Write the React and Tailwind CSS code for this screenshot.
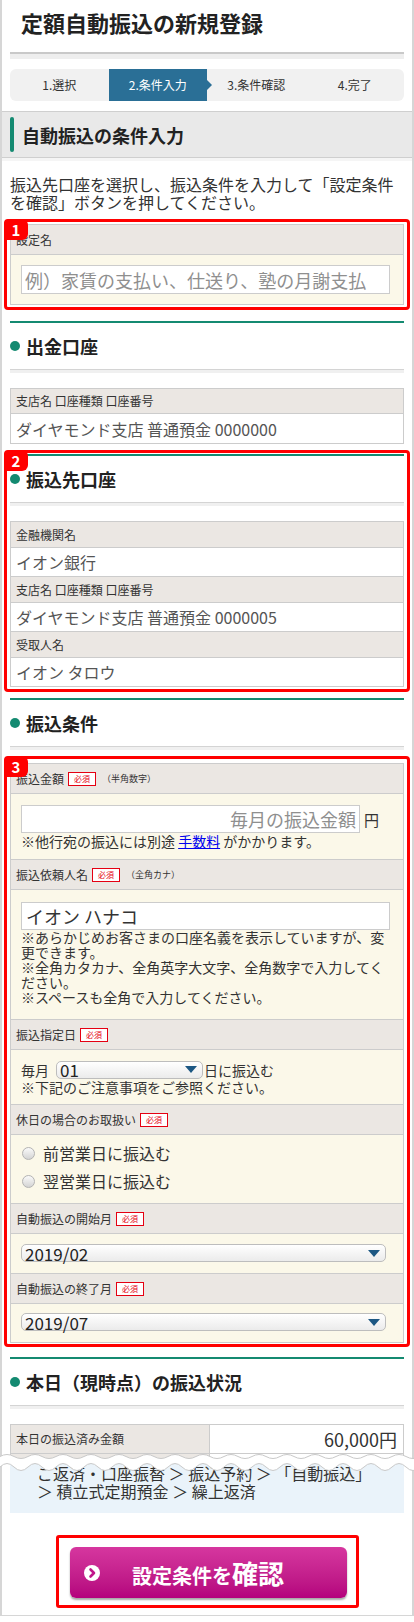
import React from 'react';

// wavy cut line drawn across the page
const buildWave = (yTop, ampTop, yBot, ampBot, period, width) => {
  const half = period / 2;
  const n = Math.ceil(width / half);
  let top = `M0 ${yTop}`;
  for (let i = 0; i < n; i++) {
    const x = i * half;
    top += ` Q${x + half / 2} ${yTop + (i % 2 ? 2 * ampTop : -2 * ampTop)} ${x + half} ${yTop}`;
  }
  let bot = `M0 ${yBot}`;
  for (let i = 0; i < n; i++) {
    const x = i * half;
    bot += ` Q${x + half / 2} ${yBot + (i % 2 ? 2 * ampBot : -2 * ampBot)} ${x + half} ${yBot}`;
  }
  let fill = top + ` L${n * half} ${yBot}`;
  for (let i = n - 1; i >= 0; i--) {
    const x = i * half;
    fill += ` Q${x + half / 2} ${yBot + (i % 2 ? 2 * ampBot : -2 * ampBot)} ${x} ${yBot}`;
  }
  fill += ' Z';
  return { top, bot, fill };
};

const wave = buildWave(5.5, 2, 16, 3.5, 28, 414);

const Badge = ({ n }) => (
  <span className="absolute -left-[3px] -top-[3px] z-10 flex h-[21px] w-[24px] items-center justify-center rounded-[6px] rounded-bl-none bg-[#ff0000] text-[15px] font-bold leading-none text-white">
    {n}
  </span>
);

const Required = () => (
  <span className="ml-[4px] inline-flex h-[14px] w-[28px] items-center justify-center border border-[#e50012] bg-white text-[8px] leading-none text-[#e50012]">
    必須
  </span>
);

const Heading = ({ title }) => (
  <div>
    <div className="h-[2px] bg-[#148a71]" />
    <div className="flex h-[46px] items-center">
      <span className="h-[10px] w-[10px] rounded-full bg-[#148a71]" />
      <span className="ml-[6px] text-[18px] font-bold leading-none text-[#222]">{title}</span>
    </div>
    <div className="h-[1px] bg-[#d4d4d4]" />
    <div className="h-[3px] bg-[#f0f0f0]" />
  </div>
);

const Label = ({ children, h = 'h-[30px]' }) => (
  <div className={`flex ${h} items-center border-b border-[#cccccc] bg-[#ebe7e3] pl-[5px] text-[12px] leading-none text-[#333]`}>
    {children}
  </div>
);

const Select = ({ value, w }) => (
  <div className={`flex h-[18px] ${w} items-center justify-between rounded-[5px] border border-[#bdbdbd] bg-linear-to-b from-white to-[#ebebeb] pl-[3px] pr-[5px]`}>
    <span className="text-[17px] leading-none text-[#222]">{value}</span>
    <svg width="12" height="7" viewBox="0 0 12 7">
      <path d="M0 0 H12 L6 7 Z" fill="#1c5783" />
    </svg>
  </div>
);

const Radio = ({ label }) => (
  <div className="flex h-[28px] items-center">
    <span className="ml-[1px] h-[13px] w-[13px] rounded-full border border-[#b3b3b3] bg-linear-to-b from-[#fafafa] to-[#d4d4d4]" />
    <span className="ml-[8px] text-[16px] leading-none text-[#333]">{label}</span>
  </div>
);

export default function App() {
  return (
    <div className="min-h-[1622px] bg-white font-['Noto_Sans_CJK_JP','Noto_Sans',sans-serif] text-[#333]">
      <div className="border-x-2 border-b border-[#d6d6d6] px-[8px] pb-[7px]">
        <h1 className="h-[52px] pl-[11px] pt-[9px] text-[22px] font-bold leading-[26px] text-[#222]">
          定額自動振込の新規登録
        </h1>
        <div className="h-[2px] bg-[#c9c9c9]" />
        <div className="h-[5px] bg-[#eeeeee]" />

        <div className="mt-[10px] grid h-[32px] grid-cols-4 rounded-[6px] bg-[#f1f1f1] text-[12px] leading-none text-[#333]">
          <div className="flex items-center justify-center">1.選択</div>
          <div className="relative flex items-center justify-center bg-[#2a6f96] text-white">
            2.条件入力
            <span className="absolute -right-[5px] top-1/2 h-0 w-0 -translate-y-1/2 border-y-[5px] border-l-[5px] border-y-transparent border-l-[#2a6f96]" />
          </div>
          <div className="flex items-center justify-center">3.条件確認</div>
          <div className="flex items-center justify-center">4.完了</div>
        </div>

        <div className="-mx-[8px] mt-[10px]">
          <div className="flex h-[47px] items-center border-y border-[#cfcfcf] bg-[#e9e9e9]">
            <span className="ml-[8px] h-[35px] w-[4px] rounded-[2px] bg-[#148a71]" />
            <span className="ml-[8px] text-[18px] font-bold leading-none text-[#222]">自動振込の条件入力</span>
          </div>
          <div className="h-[3px] bg-[#f5f5f5]" />
        </div>

        <p className="mt-[14px] text-[16px] leading-[18px] text-[#333]">
          振込先口座を選択し、振込条件を入力して「設定条件を確認」ボタンを押してください。
        </p>

        {/* 1 */}
        <div className="relative -mx-[6px] mt-[8px] rounded-[4px] border-[3px] border-[#ff0000] px-[3px] py-[2px]">
          <Badge n="1" />
          <div className="border border-[#cccccc]">
            <Label h="h-[30px]">設定名</Label>
            <div className="bg-[#fbf8e9] py-[10px] pl-[10px] pr-[13px]">
              <input
                readOnly
                placeholder="例）家賃の支払い、仕送り、塾の月謝支払"
                className="h-[29px] w-full border border-[#cccccc] bg-white pl-[3px] text-[18px] leading-none outline-none placeholder:text-[#8f8f8f]"
              />
            </div>
          </div>
        </div>

        <div className="mt-[11px]">
          <Heading title="出金口座" />
        </div>
        <div className="mt-[15px] border border-[#cccccc]">
          <Label h="h-[25px]">支店名 口座種類 口座番号</Label>
          <div className="flex h-[29px] items-center bg-white pl-[5px] text-[16px] leading-none text-[#555]">
            ダイヤモンド支店 普通預金 0000000
          </div>
        </div>

        {/* 2 */}
        <div className="relative -mx-[6px] mt-[6px] rounded-[4px] border-[3px] border-[#ff0000] px-[3px] pb-[2px] pt-[1px]">
          <Badge n="2" />
          <Heading title="振込先口座" />
          <div className="mt-[15px] border border-[#cccccc]">
            <Label h="h-[26px]">金融機関名</Label>
            <div className="flex h-[29px] items-center border-b border-[#cccccc] bg-white pl-[5px] text-[16px] leading-none text-[#555]">
              イオン銀行
            </div>
            <Label h="h-[26px]">支店名 口座種類 口座番号</Label>
            <div className="flex h-[29px] items-center border-b border-[#cccccc] bg-white pl-[5px] text-[16px] leading-none text-[#555]">
              ダイヤモンド支店 普通預金 0000005
            </div>
            <Label h="h-[26px]">受取人名</Label>
            <div className="flex h-[28px] items-center bg-white pl-[5px] text-[16px] leading-none text-[#555]">
              イオン タロウ
            </div>
          </div>
        </div>

        <div className="mt-[6px]">
          <Heading title="振込条件" />
        </div>

        {/* 3 */}
        <div className="relative -mx-[6px] mt-[6px] rounded-[4px] border-[3px] border-[#ff0000] px-[3px] pb-[1px] pt-[4px]">
          <Badge n="3" />
          <div className="border border-[#cccccc]">
            <Label>
              振込金額
              <Required />
              <span className="ml-[6px] text-[9px] text-[#333]">（半角数字）</span>
            </Label>
            <div className="border-b border-[#cccccc] bg-[#fbf8e9] pb-[10px] pl-[10px] pt-[11px]">
              <div className="flex items-center">
                <input
                  readOnly
                  placeholder="毎月の振込金額"
                  className="h-[28px] w-[339px] border border-[#cccccc] bg-white pr-[3px] text-right text-[18px] leading-none outline-none placeholder:text-[#8f8f8f]"
                />
                <span className="ml-[4px] text-[15px] leading-none">円</span>
              </div>
              <p className="text-[14px] leading-[16px]">
                ※他行宛の振込には別途 <span className="text-[#0000ee] underline">手数料</span> がかかります。
              </p>
            </div>

            <Label>
              振込依頼人名
              <Required />
              <span className="ml-[6px] text-[9px] text-[#333]">（全角カナ）</span>
            </Label>
            <div className="border-b border-[#cccccc] bg-[#fbf8e9] pb-[14px] pl-[10px] pr-[13px] pt-[12px]">
              <div className="flex h-[28px] items-center border border-[#cccccc] bg-white pl-[4px] text-[18px] leading-none text-[#333]">
                イオン ハナコ
              </div>
              <div className="text-[14px] leading-[15px]">
                <p>※あらかじめお客さまの口座名義を表示していますが、変更できます。</p>
                <p>※全角カタカナ、全角英字大文字、全角数字で入力してください。</p>
                <p>※スペースも全角で入力してください。</p>
              </div>
            </div>

            <Label>
              振込指定日
              <Required />
            </Label>
            <div className="border-b border-[#cccccc] bg-[#fbf8e9] pb-[9px] pl-[10px] pt-[10px]">
              <div className="flex h-[19px] items-center text-[14px] leading-none">
                <span>毎月</span>
                <div className="ml-[7px]">
                  <Select value="01" w="w-[147px]" />
                </div>
                <span className="ml-[1px]">日に振込む</span>
              </div>
              <p className="text-[14px] leading-[16px]">※下記のご注意事項をご参照ください。</p>
            </div>

            <Label>
              休日の場合のお取扱い
              <Required />
            </Label>
            <div className="border-b border-[#cccccc] bg-[#fbf8e9] pb-[8px] pl-[10px] pt-[4px]">
              <Radio label="前営業日に振込む" />
              <Radio label="翌営業日に振込む" />
            </div>

            <Label>
              自動振込の開始月
              <Required />
            </Label>
            <div className="border-b border-[#cccccc] bg-[#fbf8e9] pb-[11px] pl-[10px] pr-[17px] pt-[10px]">
              <Select value="2019/02" w="w-full" />
            </div>

            <Label>
              自動振込の終了月
              <Required />
            </Label>
            <div className="bg-[#fbf8e9] pb-[11px] pl-[10px] pr-[17px] pt-[9px]">
              <Select value="2019/07" w="w-full" />
            </div>
          </div>
        </div>

        <div className="mt-[10px]">
          <Heading title="本日（現時点）の振込状況" />
        </div>

        <div className="relative mt-[15px]">
          <div className="flex border-x border-t border-[#cccccc]">
            <div className="flex h-[28px] w-[199px] items-center border-r border-[#cccccc] bg-[#ebe7e3] pl-[5px] text-[12px] leading-none">
              本日の振込済み金額
            </div>
            <div className="flex h-[28px] flex-1 items-center justify-end bg-white pr-[6px] text-[18px] leading-none text-[#333]">
              60,000円
            </div>
          </div>
          <div className="flex h-[10px] border-x border-t border-[#cccccc]">
            <div className="w-[199px] border-r border-[#cccccc] bg-[#ebe7e3]" />
            <div className="flex-1 bg-white" />
          </div>
          <div className="bg-[#eaf3fa] pb-[13px] pl-[27px] pt-[1px] text-[16px] leading-[18px] text-[#333]">
            <p>ご返済・口座振替 ＞ 振込予約 ＞ 「自動振込」</p>
            <p>＞ 積立式定期預金 ＞ 繰上返済</p>
          </div>
          <svg
            className="pointer-events-none absolute -left-[10px] top-[27px]"
            width="414"
            height="24"
            viewBox="0 0 414 24"
          >
            <path d={wave.fill} fill="#ffffff" />
            <path d={wave.top} fill="none" stroke="#c9c9c9" strokeWidth="1" />
            <path d={wave.bot} fill="none" stroke="#c9c9c9" strokeWidth="1" />
          </svg>
        </div>

        <div className="mt-[22px] flex justify-center">
          <div className="w-[303px] rounded-[3px] border-[3px] border-[#ff0000] pb-[7px] pl-[11px] pr-[9px] pt-[9px]">
            <button className="flex h-[51px] w-full items-center rounded-[6px] bg-linear-to-b from-[#d6369f] to-[#b4007d] px-[14px] shadow-[0_2px_2px_rgba(0,0,0,0.35)]">
              <svg width="16" height="16" viewBox="0 0 16 16">
                <circle cx="8" cy="8" r="8" fill="#ffffff" />
                <path d="M6.5 4.5 L10 8 L6.5 11.5" fill="none" stroke="#c0168b" strokeWidth="2.6" strokeLinecap="round" strokeLinejoin="round" />
              </svg>
              <span className="flex-1 text-center font-bold leading-none text-white">
                <span className="text-[20px]">設定条件を</span>
                <span className="text-[26px]">確認</span>
              </span>
              <span className="w-[16px]" />
            </button>
          </div>
        </div>
      </div>
    </div>
  );
}
